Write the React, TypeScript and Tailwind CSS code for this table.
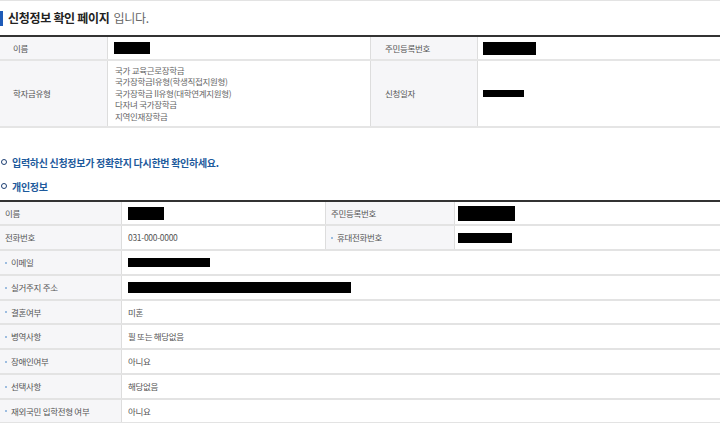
import React from "react";

const font = { fontFamily: '"Noto Sans CJK KR", "Noto Sans", sans-serif' };

function Box({ w, h }: { w: number; h: number }) {
  return <div className="bg-black" style={{ width: w, height: h }} />;
}

function Dot() {
  return <span className="mr-[4px] inline-block h-[2px] w-[2px] bg-[#9dbde0]" />;
}

function Ring() {
  return <span className="mr-[5px] inline-block h-[6px] w-[6px] rounded-full border-[1.5px] border-[#1d3f73]" />;
}

type Row = { label: string; dot?: boolean; value?: React.ReactNode; label2?: string; dot2?: boolean; value2?: React.ReactNode; h?: number };

const rows2: Row[] = [
  { label: "이름", value: <Box w={36} h={13} />, label2: "주민등록번호", value2: <Box w={57} h={15} />, h: 24 },
  { label: "전화번호", value: "031-000-0000", label2: "휴대전화번호", dot2: true, value2: <Box w={54} h={10} />, h: 25 },
  { label: "이메일", dot: true, value: <Box w={82} h={9} />, h: 25 },
  { label: "실거주지 주소", dot: true, value: <Box w={223} h={11} />, h: 25 },
  { label: "결혼여부", dot: true, value: "미혼", h: 24 },
  { label: "병역사항", dot: true, value: "필 또는 해당없음", h: 25 },
  { label: "장애인여부", dot: true, value: "아니요", h: 25 },
  { label: "선택사항", dot: true, value: "해당없음", h: 25 },
  { label: "재외국민 입학전형 여부", dot: true, value: "아니요", h: 24 },
];

export default function App() {
  return (
    <div className="h-[423px] w-[720px] overflow-hidden bg-white text-[8.5px] tracking-[-0.3px] text-[#555]" style={font}>
      <div className="border-t border-[#e3e3e3]" />
      {/* title */}
      <div className="flex h-[34px] items-center">
        <span className="mr-[5px] h-[15px] w-[3px] bg-[#1e5bb8]" />
        <span className="text-[12px] font-bold tracking-[-0.3px] text-[#222]">신청정보 확인 페이지</span>
        <span className="ml-[4px] text-[12px] tracking-[-0.3px] text-[#666]">입니다.</span>
      </div>
      {/* table 1 */}
      <div className="border-t-2 border-[#333]">
        <div className="flex h-[24px] border-b-2 border-[#e5e5e5]">
          <div className="flex w-[108px] items-center border-r border-[#ddd] bg-[#f6f6f8] pl-[13px]">이름</div>
          <div className="flex w-[262px] items-center pl-[6px]"><Box w={36} h={12} /></div>
          <div className="flex w-[108px] items-center border-x border-[#ddd] bg-[#f6f6f8] pl-[14px]">주민등록번호</div>
          <div className="flex flex-1 items-center pl-[5px]"><Box w={53} h={13} /></div>
        </div>
        <div className="flex h-[67px] border-b-2 border-[#e5e5e5]">
          <div className="flex w-[108px] items-center border-r border-[#ddd] bg-[#f6f6f8] pl-[13px]">학자금유형</div>
          <div className="flex w-[262px] flex-col justify-center pl-[7px] leading-[11.5px] text-[#666]">
            <div>국가 교육근로장학금</div>
            <div>국가장학금I유형(학생직접지원형)</div>
            <div>국가장학금 II유형(대학연계지원형)</div>
            <div>다자녀 국가장학금</div>
            <div>지역인재장학금</div>
          </div>
          <div className="flex w-[108px] items-center border-x border-[#ddd] bg-[#f6f6f8] pl-[14px]">신청일자</div>
          <div className="flex flex-1 items-center pl-[5px]"><Box w={41} h={7} /></div>
        </div>
      </div>
      {/* notices */}
      <div className="mt-[24px] flex h-[20px] items-center pl-[1px] text-[10px] font-bold tracking-[-0.3px] text-[#1d5a9c]">
        <Ring />입력하신 신청정보가 정확한지 다시한번 확인하세요.
      </div>
      <div className="mt-[4px] flex h-[20px] items-center pl-[1px] text-[10px] font-bold tracking-[-0.3px] text-[#1d5a9c]">
        <Ring />개인정보
      </div>
      {/* table 2 */}
      <div className="mt-[4px] border-t-2 border-[#333]">
        {rows2.map((r, i) => (
          <div key={i} className="flex border-b-2 border-[#e3e3e3]" style={{ height: r.h ?? 25 }}>
            <div className="flex w-[122px] items-center border-r border-[#ddd] bg-[#f6f6f8] pl-[5px]">
              {r.dot && <Dot />}
              {r.label}
            </div>
            {r.label2 ? (
              <>
                <div className="flex w-[203px] items-center pl-[6px]">{r.value}</div>
                <div className="flex w-[130px] items-center border-x border-[#ddd] bg-[#f6f6f8] pl-[5px]">
                  {r.dot2 && <Dot />}
                  {r.label2}
                </div>
                <div className="flex flex-1 items-center pl-[3px]">{r.value2}</div>
              </>
            ) : (
              <div className="flex flex-1 items-center pl-[6px]">{r.value}</div>
            )}
          </div>
        ))}
      </div>
    </div>
  );
}
